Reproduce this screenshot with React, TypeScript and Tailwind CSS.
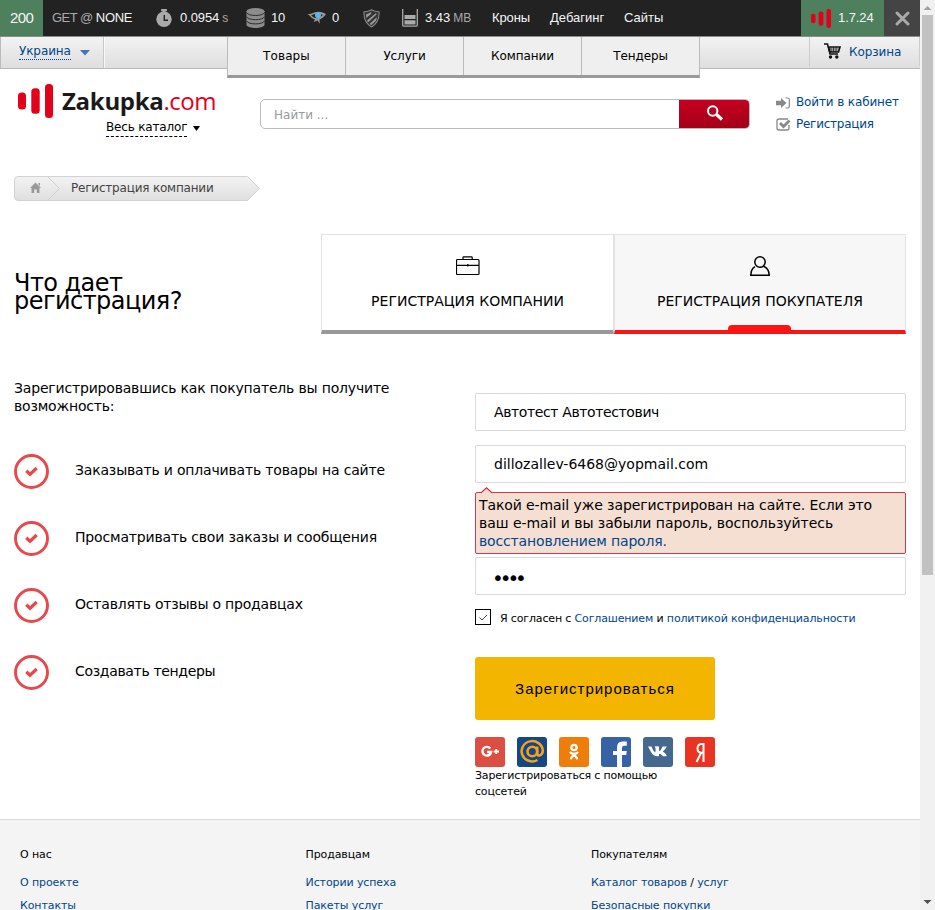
import type { ReactNode } from "react";

function Stopwatch() {
  return (
    <svg className="h-[18px] w-[16px]" viewBox="0 0 16 18">
      <rect x="5" y="0" width="6" height="2.4" rx="0.8" fill="#aaa" />
      <rect x="7" y="1.500" width="2" height="3" fill="#aaa" />
      <circle cx="8" cy="10.300" r="7.700" fill="#aaa" />
      <path d="M8.300 6V11.300H12" fill="none" stroke="#222" strokeWidth="1.400" />
    </svg>
  );
}

function Database() {
  return (
    <svg className="h-[20px] w-[19px]" viewBox="0 0 19 20">
      <path d="M.5 3V17C2 21 17 21 18.500 17V3z" fill="#8c8c8c" />
      <ellipse cx="9.500" cy="3.400" rx="9" ry="3.300" fill="#8c8c8c" />
      <path
        d="M.5 4.500C2 8.500 17 8.500 18.500 4.500M.5 8.700C2 12.700 17 12.700 18.500 8.700M.5 12.900C2 16.900 17 16.900 18.500 12.900"
        fill="none"
        stroke="#222"
        strokeWidth="0.9"
      />
    </svg>
  );
}

function Eye() {
  return (
    <svg className="h-[14px] w-[20px]" viewBox="0 0 20 14">
      <path d="M.5 3.500Q5 2.500 8 1.200Q13-.5 19 3L18 4.500Q15 8 12.500 8.500L12.800 12.800L10.500 9.500L6.500 11L8 8.500Q4 7 2.500 4.500z" fill="#999" />
      <path d="M4 4.500Q9 1.500 16 4Q10 10 4 4.500" fill="#222" />
      <circle cx="11" cy="4.300" r="3" fill="#5bb5e8" />
    </svg>
  );
}

function Shield() {
  return (
    <svg className="h-[19px] w-[17px]" viewBox="0 0 17 19">
      <path d="M8.500.8Q12 3 16 2.800Q16.800 13 8.500 18Q.2 13 1 2.800Q5 3 8.500.8z" fill="#333" stroke="#888" strokeWidth="1.100" />
      <path d="M3 5.500L8.500 3L8 5L3.300 9zM4 11.500L12.500 4.500L14 5L5 13.500zM6.500 15L14 8L13 11.800L8.500 16z" fill="#999" />
    </svg>
  );
}

function Memory() {
  return (
    <svg className="h-[18px] w-[16px]" viewBox="0 0 16 18">
      <path d="M.7 0V16Q.7 17.200 2 17.200H14Q15.300 17.200 15.300 16V0" fill="none" stroke="#aaa" strokeWidth="1.300" />
      <path d="M2.500 6H13.500V10H2.500zM2.500 11.200H13.500V15.500H2.500z" fill="#aaa" />
    </svg>
  );
}

function LogoBars({ className }: { className: string }) {
  return (
    <svg className={className} viewBox="0 0 35 34" preserveAspectRatio="none">
      <rect x="0" y="8.500" width="8" height="17" rx="3.500" fill="#e2001a" />
      <rect x="13.300" y="4.300" width="8.400" height="25.500" rx="3.500" fill="#e2001a" />
      <rect x="27" y="0" width="8" height="34" rx="3.500" fill="#e2001a" />
    </svg>
  );
}

function Toolbar() {
  return (
    <div className="grid h-[37px] shrink-0 grid-cols-[43px_113px_90px_61px_56px_39px_90px_57px_75px_177px_83px_36px] border-b border-[#8c8c8c] bg-[#222] font-['Liberation_Sans',Arial,sans-serif] text-[13px] whitespace-nowrap text-[#f5f5f5]">
      <div className="flex items-center bg-[#4f805d] pl-[10px] text-[15px] tracking-[-0.6px]">200</div>
      <div className="flex items-center pl-[9px]">
        <span className="tracking-[-0.5px] text-[#aaa]">GET @</span>
        <span className="ml-[3px] tracking-[-0.3px]">NONE</span>
      </div>
      <div className="flex items-center">
        <Stopwatch />
        <span className="ml-[8px] tracking-[-0.1px]">0.0954</span>
        <span className="ml-[3px] text-[12px] text-[#aaa]">s</span>
      </div>
      <div className="flex items-center">
        <Database />
        <span className="ml-[6px] tracking-[-0.2px]">10</span>
      </div>
      <div className="flex items-center">
        <Eye />
        <span className="ml-[5px]">0</span>
      </div>
      <div className="flex items-center">
        <Shield />
      </div>
      <div className="flex items-center">
        <Memory />
        <span className="ml-[7px]">3.43</span>
        <span className="ml-[3px] text-[12px] text-[#aaa]">MB</span>
      </div>
      <div className="flex items-center tracking-[-0.1px]">Кроны</div>
      <div className="flex items-center pl-px">Дебагинг</div>
      <div className="flex items-center">Сайты</div>
      <div className="flex items-center bg-[#4f805d] pl-[10px]">
        <LogoBars className="h-[19px] w-[20px]" />
        <span className="ml-[7px] tracking-[-0.1px]">1.7.24</span>
      </div>
      <div className="flex items-center bg-[#444] pl-[11px]">
        <svg className="h-[15px] w-[15px]" viewBox="0 0 15 15">
          <path d="M2 2L13 13M13 2L2 13" stroke="#aaa" strokeWidth="3" strokeLinecap="round" />
        </svg>
      </div>
    </div>
  );
}

const sections = [
  { label: "Товары", style: "tracking-[0.1px]" },
  { label: "Услуги", style: "border-l border-[#bbb] tracking-[-0.1px]" },
  { label: "Компании", style: "border-l border-[#bbb] tracking-[-0.1px]" },
  { label: "Тендеры", style: "border-l border-[#bbb] tracking-[-0.1px]" },
];

function NavBar() {
  return (
    <div className="flex h-[41px] shrink-0 text-[12px]">
      <div className="flex h-[32px] w-[227px] border-b border-l border-[#bbb] bg-linear-to-b from-[#f3f3f3] to-[#dedede]">
        <div className="flex w-[103px] border-r border-[#c8c8c8] pl-[18px]">
          <span className="mt-[5px] h-[18px] border-b border-dotted border-[#00468c] leading-[18px] tracking-[-0.1px] text-[#00468c]">Украина</span>
          <svg className="mt-[12px] ml-[9px] h-[7px] w-[10px]" viewBox="0 0 10 7">
            <path d="M0 1H10L5 6.500z" fill="#4575b0" />
          </svg>
        </div>
        <div className="w-px bg-white/70" />
      </div>
      <div className="flex h-[41px] w-[473px] border-r border-b-3 border-l border-r-[#bbb] border-b-[#999] border-l-[#bbb] bg-[#efefef] text-black">
        {sections.map((s) => (
          <div key={s.label} className={`flex h-[38px] flex-1 items-center justify-center ${s.style}`}>
            {s.label}
          </div>
        ))}
      </div>
      <div className="flex h-[32px] w-[220px] border-b border-[#bbb] bg-linear-to-b from-[#f3f3f3] to-[#dedede] pl-[109px]">
        <div className="flex h-[29px] w-full border-r border-l border-[#ccc] pl-[14px]">
          <svg className="mt-[6px] h-[16px] w-[17px]" viewBox="0 0 17 16">
            <path d="M0 1H3.500L6 11H14" fill="none" stroke="#111" strokeWidth="1.500" />
            <path d="M4.500 4H16L14.500 9H5.800z" fill="none" stroke="#111" strokeWidth="1.600" />
            <path d="M5 6H15M6 8H15M7 4V9M9.500 4V9M12 4V9" stroke="#111" strokeWidth=".7" />
            <circle cx="6.500" cy="14" r="1.700" fill="#111" />
            <circle cx="12.800" cy="14" r="1.700" fill="#111" />
          </svg>
          <span className="mt-[6px] ml-[8px] leading-[18px] tracking-[-0.1px] text-[#00468c]">Корзина</span>
        </div>
      </div>
    </div>
  );
}

function Header() {
  return (
    <div className="flex h-[98px] shrink-0">
      <div className="w-[260px] pl-[18px]">
        <div className="flex h-[40px] pt-[6px]">
          <LogoBars className="h-[34px] w-[35px]" />
          <div className="ml-[9px] font-['Open_Sans',sans-serif] text-[24px] leading-[34px] whitespace-nowrap">
            <span className="font-bold tracking-[-0.3px] text-[#1a1a1a]">Zakupka</span>
            <span className="tracking-[-0.5px] text-[#e2001a]">.com</span>
          </div>
        </div>
        <div className="ml-[88px] flex text-[12px] tracking-[-0.17px] text-black">
          <span className="h-[19px] border-b border-dashed border-black leading-[18px]">Весь каталог</span>
          <svg className="mt-[8px] ml-[6px] h-[5px] w-[7px]" viewBox="0 0 7 5">
            <path d="M0 0H7L3.500 5z" fill="#000" />
          </svg>
        </div>
      </div>
      <div className="mt-[21px] flex h-[30px] w-[490px] items-center rounded-[5px] border border-[#bbb] pl-[13px] text-[12px] text-[#999]">
        <span className="pt-px">Найти ...</span>
        <div className="ml-auto flex h-[28px] w-[70px] items-center justify-center rounded-r-[4px] bg-linear-to-b from-[#c4001f] to-[#a50019]">
          <svg className="-mt-px ml-[2px] h-[17px] w-[18px]" viewBox="0 0 18 17">
            <circle cx="6.700" cy="6" r="4.700" fill="none" stroke="#fff" strokeWidth="2" />
            <path d="M10.500 9.500L16 14.500" stroke="#fff" strokeWidth="3.200" />
          </svg>
        </div>
      </div>
      <div className="ml-[26px] flex flex-col pt-[13px] text-[12px] text-[#00468c]">
        <div className="flex h-[22px] gap-[6px]">
          <svg className="mt-[6px] h-[12px] w-[14px]" viewBox="0 0 14 12">
            <path d="M0 3.700H5V1L10.500 6L5 11V8.300H0z" fill="#888" />
            <path d="M9.500 1H12Q13.300 1 13.300 2.500V9.500Q13.300 11 12 11H9.500" fill="none" stroke="#888" strokeWidth="1.200" />
          </svg>
          <span className="leading-[22px] tracking-[-0.13px]">Войти в кабинет</span>
        </div>
        <div className="flex h-[22px] gap-[5px]">
          <svg className="mt-[5px] h-[13px] w-[15px]" viewBox="0 0 15 13">
            <path d="M12 1H3Q1 1 1 3V10Q1 12 3 12H11Q13 12 13 10V7" fill="none" stroke="#888" strokeWidth="1.300" />
            <path d="M4 5L7.500 8.500L13.500 2.500" fill="none" stroke="#888" strokeWidth="2.800" />
          </svg>
          <span className="leading-[22px] tracking-[-0.25px]">Регистрация</span>
        </div>
      </div>
    </div>
  );
}

function Breadcrumb() {
  return (
    <div className="ml-[14px] grid h-[25px] w-[246px] shrink-0 text-[12px] tracking-[-0.2px] text-[#444]">
      <svg className="col-start-1 row-start-1 h-[25px] w-[246px]" viewBox="0 0 246 25">
        <defs>
          <linearGradient id="crumb" x1="0" y1="0" x2="0" y2="1">
            <stop offset="0" stopColor="#f3f3f3" />
            <stop offset="1" stopColor="#dfdfdf" />
          </linearGradient>
        </defs>
        <path d="M4 .5H233.500L245.500 12.500L233.500 24.500H4Q.5 24.500 .5 21V4Q.5 .5 4 .5z" fill="url(#crumb)" stroke="#d2d2d2" />
        <path d="M34 1L45.500 12.500L34 24" fill="none" stroke="#d2d2d2" />
        <path d="M21.500 6.500L27 12H25.500V17H22.800V13.500H20.200V17H17.500V12H16L21.500 6.500zM24.500 7H26V10L24.500 8.500z" fill="#999" />
      </svg>
      <span className="col-start-1 row-start-1 pl-[57px] leading-[24px]">Регистрация компании</span>
    </div>
  );
}

function Tabs() {
  return (
    <div className="flex h-[100px] w-[585px] text-[14px] text-black">
      <div className="flex w-[293px] flex-col items-center border-t border-r border-b-4 border-l border-[#e3e3e3] border-b-[#999] bg-white">
        <svg className="mt-[21px] h-[20px] w-[24px]" viewBox="0 0 24 20">
          <path d="M1.500 3.500H22Q23 3.500 23 4.500V17.500Q23 18.500 22 18.500H1.500Q.5 18.500 .5 17.500V4.500Q.5 3.500 1.500 3.500zM7 3V1.500Q7 .8 7.700 .8H15.500Q16.200 .8 16.200 1.500V3M.5 9.300H23M11.800 8V10.500" fill="none" stroke="#000" strokeWidth="1.200" />
        </svg>
        <span className="mt-[15px] leading-[20px] whitespace-nowrap">РЕГИСТРАЦИЯ КОМПАНИИ</span>
      </div>
      <div className="flex w-[292px] flex-col items-center border-t border-r border-b-4 border-l border-[#e3e3e3] border-b-[#fc1414] bg-[#f7f7f7]">
        <svg className="mt-[21px] h-[20px] w-[20px]" viewBox="0 0 20 20">
          <circle cx="10" cy="6" r="5.200" fill="none" stroke="#000" strokeWidth="1.500" />
          <path d="M5 10.700Q1 13 .8 19.200H19.200Q19 12.500 13.500 10.300" fill="none" stroke="#000" strokeWidth="1.500" />
        </svg>
        <span className="mt-[15px] leading-[20px] whitespace-nowrap">РЕГИСТРАЦИЯ ПОКУПАТЕЛЯ</span>
        <div className="mt-auto mr-px h-[5px] w-[63px] rounded-t-[4px] bg-[#fc1414]" />
      </div>
    </div>
  );
}

function Benefit({ className, children }: { className: string; children: ReactNode }) {
  return (
    <div className="flex h-[67px]">
      <svg className="h-[35px] w-[35px]" viewBox="0 0 35 35">
        <circle cx="17.500" cy="17.500" r="16" fill="none" stroke="#e8474c" strokeWidth="2.900" />
        <path d="M12.300 16.800L16 20.200L22.700 14" fill="none" stroke="#e8474c" strokeWidth="3.200" />
      </svg>
      <span className={`ml-[26px] leading-[32px] whitespace-nowrap ${className}`}>{children}</span>
    </div>
  );
}

function Social() {
  return (
    <div className="mt-[17px] flex gap-[12px]">
      <svg className="h-[30px] w-[30px] rounded-[3px] bg-[#dc4e41]" viewBox="0 0 30 30">
        <path d="M15.300 11.500A4.400 4.400 0 1 0 16.200 15H12" fill="none" stroke="#fff" strokeWidth="2.300" />
        <path d="M18.700 14.500H24M21.300 11.900V17.100" stroke="#fff" strokeWidth="1.800" />
      </svg>
      <svg className="h-[30px] w-[30px] rounded-[3px] bg-[#134785]" viewBox="0 0 30 30">
        <circle cx="15.300" cy="14.500" r="4.800" fill="none" stroke="#f9a01b" strokeWidth="2.600" />
        <path d="M20.300 9.500V16.500Q20.500 19 22.500 18.500Q25.800 17.500 25.800 13.500A10.600 10.100 0 1 0 20.500 23" fill="none" stroke="#f9a01b" strokeWidth="2.500" />
      </svg>
      <svg className="h-[30px] w-[30px] rounded-[3px] bg-[#ef7d0a]" viewBox="0 0 30 30">
        <circle cx="15" cy="10.500" r="2.700" fill="none" stroke="#fff" strokeWidth="2.200" />
        <path d="M11.700 15.700Q15 18 18.300 15.700M15 17.500L12 21.300M15 17.500L18 21.300" fill="none" stroke="#fff" strokeWidth="2.400" strokeLinecap="round" />
      </svg>
      <svg className="h-[30px] w-[30px] rounded-[3px] bg-[#3763a5]" viewBox="0 0 30 30">
        <path d="M16 30V18H12V14H16V10.500Q16 4.500 21.500 4.500H25.800V8.700H23Q21 8.700 21 11V14H25.800L25.200 18H21V30z" fill="#fff" />
      </svg>
      <svg className="h-[30px] w-[30px] rounded-[3px] bg-[#45688e]" viewBox="0 0 30 30">
        <path d="M5 9.500H8.500Q10 14 12 15.500Q13 14 12.500 11L11.500 9.500Q13 9 16 9.500V14Q17.500 14.500 19.500 9.500H23.500Q24 10.500 19.800 14.500Q24.500 18 23.500 19.200H20Q17 16 16 17V19.200Q10.500 19.800 8 15Z" fill="#fff" />
      </svg>
      <svg className="h-[30px] w-[30px] rounded-[3px] bg-[#e93323]" viewBox="0 0 30 30">
        <path d="M18.500 25V7H16.500Q12.500 7.200 12.500 11.500Q12.500 15.700 16.500 15.700H18.500M16 16L11.500 25" fill="none" stroke="#fff" strokeWidth="2" />
      </svg>
    </div>
  );
}

function Form() {
  const field = "flex h-[38px] w-[431px] items-center rounded-[2px] border border-[#d9d9d9] bg-white pl-[18px]";
  return (
    <div className="flex w-[431px] flex-col text-[14px] text-black">
      <div className={field}>
        <span className="tracking-[-0.38px]">Автотест Автотестович</span>
      </div>
      <div className={`mt-[14px] ${field}`}>dillozallev-6468@yopmail.com</div>
      <div className="relative mt-[9px] h-[62px] rounded-[2px] border border-[#d0384e] bg-[#f5ded2] pt-[3px] pl-[3px] leading-[18px] whitespace-nowrap">
        <svg className="absolute -top-[6px] left-[5px] h-[7px] w-[11px]" viewBox="0 0 11 7">
          <path d="M.5 5.500L5.500 .8L10.500 5.500V7H.5z" fill="#f5ded2" />
          <path d="M0 5.800L5.500 .8L11 5.800" fill="none" stroke="#e0203c" strokeWidth="1.200" />
        </svg>
        <div className="tracking-[-0.1px]">Такой e-mail уже зарегистрирован на сайте. Если это</div>
        <div className="tracking-[-0.04px]">ваш e-mail и вы забыли пароль, воспользуйтесь</div>
        <div className="tracking-[-0.15px] text-[#00468c]">восстановлением пароля.</div>
      </div>
      <div className={`mt-[3px] ${field}`}>
        <span className="-ml-[2px] pt-[3px] text-[20px] leading-[20px] tracking-[-4.100px]">••••</span>
      </div>
      <div className="mt-[14px] flex h-[16px] items-center text-[11px] whitespace-nowrap">
        <svg className="h-[16px] w-[16px] border border-black" viewBox="0 0 14 14">
          <path d="M3.500 7.500L6 10L11 5" fill="none" stroke="#444" />
        </svg>
        <span className="ml-[9px] pt-[4px] tracking-[-0.15px]">
          Я согласен с <span className="text-[#00468c]">Соглашением</span> и <span className="text-[#00468c]">политикой конфиденциальности</span>
        </span>
      </div>
      <div className="mt-[32px] flex h-[63px] w-[240px] items-center justify-center rounded-[3px] bg-[#f3b500] pt-[2px] font-['Liberation_Sans',Arial,sans-serif] text-[15px] tracking-[1px]">
        Зарегистрироваться
      </div>
      <Social />
      <div className="pt-px text-[11px] leading-[16px] tracking-[-0.2px]">
        Зарегистрироваться с помощью
        <br />
        соцсетей
      </div>
    </div>
  );
}

const columns = [
  { title: "О нас", links: ["О проекте", "Контакты"] },
  { title: "Продавцам", links: ["Истории успеха", "Пакеты услуг"] },
  { title: "Покупателям", links: ["Каталог товаров / услуг", "Безопасные покупки"] },
];

function Footer() {
  return (
    <div className="flex h-[91px] shrink-0 border-t border-[#d9d9d9] bg-[#f4f4f4] pt-[26px] pl-[20px] text-[11px] tracking-[-0.1px]">
      {columns.map((c) => (
        <div key={c.title} className="w-[285.500px] shrink-0 whitespace-nowrap">
          <div className="h-[25px] leading-[18px] text-black">{c.title}</div>
          {c.links.map((l) => (
            <div key={l} className="h-[23px] leading-[23px] text-[#00468c]">
              {l.split(" / ").map((part, i) => (
                <span key={part}>
                  {i > 0 && <span className="text-black"> / </span>}
                  {part}
                </span>
              ))}
            </div>
          ))}
        </div>
      ))}
    </div>
  );
}

export default function App() {
  return (
    <div className="flex h-[910px] w-[935px] overflow-hidden bg-white font-['DejaVu_Sans',Verdana,sans-serif]">
      <div className="flex w-[920px] flex-col">
        <Toolbar />
        <NavBar />
        <Header />
        <Breadcrumb />
        <div className="flex pt-[33px] pl-[14px]">
          <div className="w-[307px] pt-[40px] text-[24px] leading-[18px] tracking-[-0.55px] text-black">
            Что дает
            <br />
            регистрация?
          </div>
          <Tabs />
        </div>
        <div className="flex h-[485px] shrink-0 pl-[14px]">
          <div className="w-[461px] pt-[45px] text-[14px] text-black">
            <div className="h-[75px] leading-[18px] tracking-[-0.18px]">
              Зарегистрировавшись как покупатель вы получите
              <br />
              возможность:
            </div>
            <Benefit className="tracking-[-0.18px]">Заказывать и оплачивать товары на сайте</Benefit>
            <Benefit className="tracking-[-0.17px]">Просматривать свои заказы и сообщения</Benefit>
            <Benefit className="tracking-[-0.2px]">Оставлять отзывы о продавцах</Benefit>
            <Benefit className="tracking-[-0.33px]">Создавать тендеры</Benefit>
          </div>
          <div className="pt-[59px]">
            <Form />
          </div>
        </div>
        <Footer />
      </div>
      <div className="flex w-[15px] flex-col items-center bg-[#f1f1f1]">
        <svg className="h-[15px] w-[15px] shrink-0" viewBox="0 0 15 15">
          <path d="M3.500 10H11.500L7.500 6z" fill="#a3a3a3" />
        </svg>
        <div className="h-[560px] w-[11px] bg-[#c1c1c1]" />
        <svg className="mt-auto h-[15px] w-[15px] shrink-0" viewBox="0 0 15 15">
          <path d="M3.500 5H11.500L7.500 9z" fill="#505050" />
        </svg>
      </div>
    </div>
  );
}
